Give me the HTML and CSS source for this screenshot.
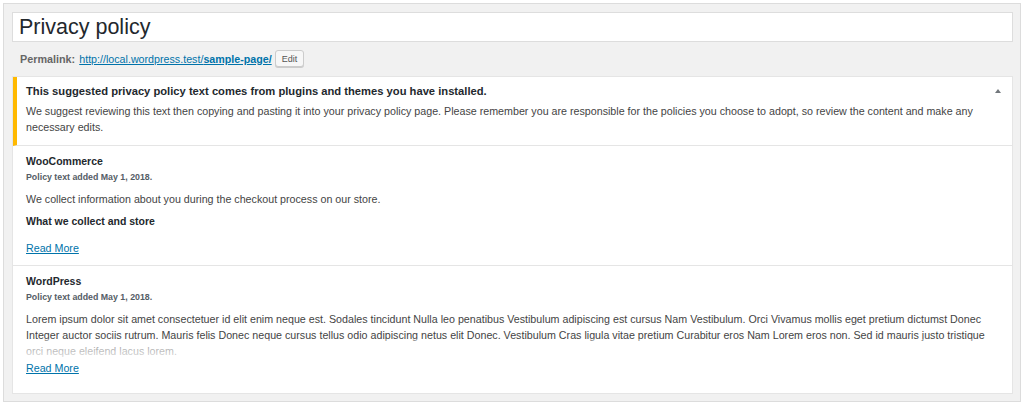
FILE: index.html
```html
<!DOCTYPE html>
<html lang="en">
<head>
    <meta charset="UTF-8">
    <title>Privacy policy</title>
    <link rel="stylesheet" href="styles.css">
</head>
<body>
    <div class="editor-frame">
        <div class="title-box">Privacy policy</div>

        <div class="permalink-row">
            <span class="permalink-label">Permalink:</span>
            <a class="permalink-url" href="#">http://local.wordpress.test/<b>sample-page/</b></a>
            <button class="edit-button">Edit</button>
        </div>

        <div class="policy-panel">
            <div class="notice">
                <div class="notice-head">
                    <strong>This suggested privacy policy text comes from plugins and themes you have installed.</strong>
                    <span class="caret"></span>
                </div>
                <p>We suggest reviewing this text then copying and pasting it into your privacy policy page. Please remember you are responsible for the policies you choose to adopt, so review the content and make any necessary edits.</p>
            </div>

            <div class="policy-section">
                <h3>WooCommerce</h3>
                <div class="policy-date">Policy text added May 1, 2018.</div>
                <div class="policy-text">
                    <p>We collect information about you during the checkout process on our store.</p>
                    <h4>What we collect and store</h4>
                </div>
                <a class="read-more" href="#">Read More</a>
            </div>

            <div class="policy-section last">
                <h3>WordPress</h3>
                <div class="policy-date">Policy text added May 1, 2018.</div>
                <div class="policy-text faded">
                    <p>Lorem ipsum dolor sit amet consectetuer id elit enim neque est. Sodales tincidunt Nulla leo penatibus Vestibulum adipiscing est cursus Nam Vestibulum. Orci Vivamus mollis eget pretium dictumst Donec Integer auctor sociis rutrum. Mauris felis Donec neque cursus tellus odio adipiscing netus elit Donec. Vestibulum Cras ligula vitae pretium Curabitur eros Nam Lorem eros non. Sed id mauris justo tristique orci neque eleifend lacus lorem.</p>
                </div>
                <a class="read-more" href="#">Read More</a>
            </div>
        </div>
    </div>
</body>
</html>
```

FILE: styles.css
```css
body {
    margin: 0;
    background: #fff;
    font-family: "Liberation Sans", Arial, sans-serif;
    color: #32373c;
}
.editor-frame {
    margin: 3px 3px 0 3px;
    height: 381px;
    border: 1px solid #dcdcdc;
    background: #f1f1f1;
    padding: 8px 7px 8px 8px;
}
.title-box {
    height: 28px;
    line-height: 28px;
    padding: 0 6px;
    border: 1px solid #dddddd;
    background: #fff;
    font-size: 21.5px;
    color: #23282d;
}
.permalink-row {
    display: flex;
    align-items: center;
    height: 17px;
    margin-top: 8px;
    padding-left: 8px;
    font-size: 10.8px;
}
.permalink-label {
    font-weight: bold;
    color: #666;
    margin-right: 4px;
}
.permalink-url {
    color: #0073aa;
    text-decoration: underline;
    font-size: 10.7px;
}
.edit-button {
    margin-left: 3px;
    height: 17px;
    padding: 0 6px;
    border: 1px solid #cccccc;
    border-radius: 3px;
    background: #f7f7f7;
    box-shadow: 0 1px 0 #cccccc;
    font-family: inherit;
    font-size: 9px;
    color: #555;
}
.policy-panel {
    margin-top: 9px;
    height: 316px;
    border: 1px solid #e5e5e5;
    background: #fff;
    font-size: 10.7px;
}
.notice {
    border-left: 4px solid #ffb900;
    padding: 6px 10px 11px 9px;
    height: 51px;
    border-bottom: 1px solid #e5e5e5;
}
.notice-head {
    display: flex;
    justify-content: space-between;
    align-items: center;
    height: 16px;
    font-size: 11.2px;
    color: #23282d;
}
.caret {
    width: 0;
    height: 0;
    margin-right: 1px;
    border-left: 3px solid transparent;
    border-right: 3px solid transparent;
    border-bottom: 4px solid #72777c;
}
.notice p {
    margin: 4px 0 0 0;
    line-height: 16px;
    color: #444;
}
.policy-section {
    padding: 7px 13px 9px 13px;
    border-bottom: 1px solid #e5e5e5;
}
.policy-section.last {
    border-bottom: none;
}
.policy-section h3 {
    margin: 0;
    height: 16px;
    line-height: 16px;
    font-size: 10.5px;
    color: #23282d;
}
.policy-date {
    height: 16px;
    line-height: 16px;
    font-size: 8.8px;
    font-weight: bold;
    color: #555d66;
}
.policy-text {
    margin-top: 6px;
    color: #444;
}
.policy-text p {
    margin: 0;
    line-height: 16px;
}
.policy-text h4 {
    margin: 6px 0 0 0;
    line-height: 16px;
    font-size: 10.5px;
    color: #23282d;
}
.policy-text.faded {
    position: relative;
    height: 46px;
    overflow: hidden;
}
.policy-text.faded::after {
    content: "";
    position: absolute;
    left: 0;
    right: 0;
    bottom: 0;
    height: 18px;
    background: linear-gradient(rgba(255, 255, 255, 0.35), rgba(255, 255, 255, 0.8));
}
.read-more {
    display: block;
    margin-top: 11px;
    line-height: 16px;
    color: #0073aa;
    text-decoration: underline;
}
.policy-section.last .read-more {
    margin-top: 3px;
}
```
